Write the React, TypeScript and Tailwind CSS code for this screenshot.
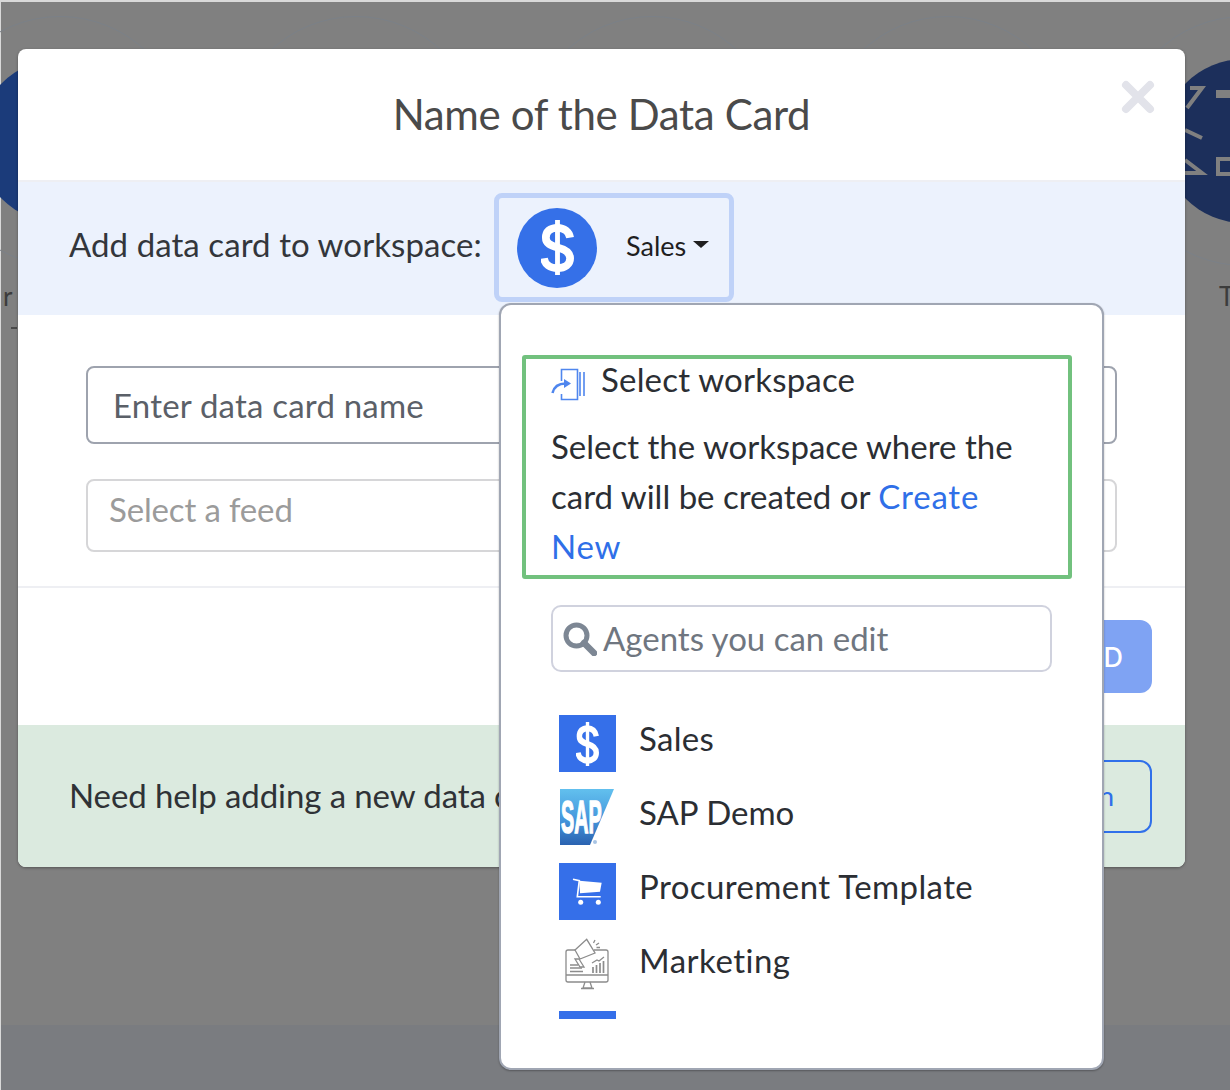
const rings = [60, 356, 652, 948, 1244];

function BackdropRing({ x }: { x: number }) {
  return (
    <div
      className="absolute top-[16px] w-[250px] h-[250px] rounded-full border border-[#7b8088]"
      style={{ left: x - 125 }}
    />
  );
}

function DollarMark({ width, height }: { width: number; height: number }) {
  return (
    <svg width={width} height={height} viewBox="0 0 34 56" fill="none" stroke="#ffffff" preserveAspectRatio="none">
      <path d="M17 0v56" strokeWidth="5" />
      <path d="M30 18c-1-6-6-10-13-10C9 8 5 12 5 18c0 6 5 8 12 10 8 2 13 5 13 11 0 6-5 10-13 10-8 0-13-4-14-10" strokeWidth="8" />
    </svg>
  );
}

function WorkspaceIcon() {
  return (
    <svg width="36" height="34" viewBox="0 0 36 34" fill="none" stroke="#4f86ee" strokeWidth="1.6">
      <path d="M10.5 13V1.5h16v30h-16V26" />
      <path d="M29 4v24M33 4v24" />
      <path d="M1.5 25c1.5-6 6-9.5 13-9.5" strokeWidth="2.6" />
      <path d="M13 11l7 4.5-7 4.5z" fill="#4f86ee" stroke="none" />
    </svg>
  );
}

function SapLogo() {
  return (
    <svg width="57" height="57" viewBox="0 0 57 57">
      <defs>
        <linearGradient id="sapFill" x1="0" y1="0" x2="0" y2="1">
          <stop offset="0" stopColor="#62c0ee" />
          <stop offset="0.55" stopColor="#4496dc" />
          <stop offset="1" stopColor="#2a62b0" />
        </linearGradient>
      </defs>
      <polygon points="1,0 55,0 31,56 1,56" fill="url(#sapFill)" />
      <text
        transform="translate(2 44) scale(0.43 1)"
        fill="#ffffff"
        stroke="#ffffff"
        strokeWidth="1.6"
        fontFamily="'Liberation Sans', sans-serif"
        fontWeight="700"
        fontSize="46"
      >
        SAP
      </text>
      <circle cx="36" cy="53" r="2" fill="#a8c4e4" />
    </svg>
  );
}

function CartIcon() {
  return (
    <div className="w-[57px] h-[57px] bg-[#356fe9]">
      <svg width="57" height="57" viewBox="0 0 57 57" fill="none" stroke="#ffffff" strokeWidth="1.6">
        <path d="M14 16.3l6.3 1.4-2 16h23.4" />
        <path d="M20.3 17.7l22.4 2-1.7 9-20 1.6z" fill="#ffffff" stroke="none" />
        <circle cx="21.7" cy="39.3" r="2.5" fill="#ffffff" stroke="none" />
        <circle cx="39.3" cy="39.3" r="2.5" fill="#ffffff" stroke="none" />
      </svg>
    </div>
  );
}

function MarketingIcon() {
  return (
    <svg width="57" height="57" viewBox="0 0 57 57" fill="none" stroke="#8c8c8c" strokeWidth="1.3">
      <path d="M18 13H9a2 2 0 0 0-2 2v28a2 2 0 0 0 2 2h38a2 2 0 0 0 2-2V15a2 2 0 0 0-2-2H35" />
      <path d="M7 38h42M26 45l-2 6h9l-2-6M22 51.5h13" />
      <path d="M20 22l5 8h-4l-5-8z" fill="#ffffff" />
      <path d="M16 13L27.7 2.3 36 16l-15 6-5-9z" fill="#ffffff" />
      <path d="M36 3l-1.5 3M40 6l-3 2M41 10.5h-3.5" />
      <path d="M11 28h8M11 31h12M11 34.5h13" strokeWidth="1.7" />
      <path d="M34 36v-6M37.5 36v-8M41 36v-10M44.5 36v-12" strokeWidth="1.7" />
      <path d="M33 26l5-3 2 1 5-4" />
    </svg>
  );
}

function ListRow({ icon, label, tracking }: { icon: React.ReactNode; label: string; tracking: string }) {
  return (
    <div className="flex items-start h-[74px]">
      <div className="w-[57px] h-[57px] shrink-0">{icon}</div>
      <span className={`ml-[23px] -mt-[2px] text-[33px] leading-[50px] text-[#2b2e33] ${tracking}`}>{label}</span>
    </div>
  );
}

export default function App() {
  return (
    <div className="relative w-[1230px] h-[1090px] overflow-hidden bg-[#d9d9d9] pt-[2px] pl-[1px] font-['Lato',sans-serif]">
      {/* Dimmed page behind the modal */}
      <div className="h-full flex flex-col bg-[#808080]">
        <div className="flex-1" />
        <div className="h-[65px] bg-[#7a7c80]" />
      </div>
      {rings.map((x) => (
        <BackdropRing key={x} x={x} />
      ))}
      <div className="absolute left-[-22px] top-[59px] w-[164px] h-[164px] rounded-full bg-[#1b3b7a]" />
      <div className="absolute left-[1162px] top-[59px] w-[164px] h-[164px] rounded-full bg-[#1c2f5b] overflow-hidden">
        <svg width="164" height="164" viewBox="0 0 164 164" fill="none" stroke="#808080" strokeWidth="4">
          <path d="M25 49L40 29H28M23 71l17 8M23 101l17 13H23" />
          <path d="M54 35h14" strokeWidth="8" />
          <path d="M56 100h14v15H56z" />
        </svg>
      </div>
      <span className="absolute left-[3px] top-[277px] text-[26px] text-[#3c3c3c]">r</span>
      <span className="absolute left-[1219px] top-[277px] text-[26px] text-[#3c3c3c]">T</span>
      <div className="absolute left-[11px] top-[327px] w-[6px] h-[2px] bg-[#4a4a4a]" />

      {/* Modal */}
      <div className="absolute left-[18px] top-[49px] w-[1167px] h-[818px] rounded-[8px] bg-white overflow-hidden flex flex-col shadow-[0_1px_3px_rgba(0,0,0,0.35)]">
        <div className="relative h-[133px] shrink-0 flex items-center justify-center border-b-2 border-[#eeeff3]">
          <h1 className="text-[42px] tracking-[-0.35px] text-[#4a4a4a] leading-none -mt-[1px]">Name of the Data Card</h1>
          <svg className="absolute left-[1103px] top-[31px]" width="34" height="34" viewBox="0 0 34 34" stroke="#e2e3ea" strokeWidth="8" strokeLinecap="round">
            <path d="M5 5l24 24M29 5L5 29" />
          </svg>
        </div>
        <div className="h-[133px] shrink-0 bg-[#ecf2fd] flex items-start pl-[51px] pt-[11px]">
          <span className="w-[413px] mt-[26px] text-[33px] tracking-[0.07px] leading-[50px] text-[#33363b] whitespace-nowrap">Add data card to workspace:</span>
          <div className="ml-[12px] w-[240px] h-[109px] rounded-[8px] border-[5px] border-[#bfd2f8] flex items-center pl-[18px]">
            <div className="w-[80px] h-[80px] rounded-full bg-[#3570e8] flex items-center justify-center">
              <DollarMark width={33} height={55} />
            </div>
            <span className="ml-[29px] -mt-[2px] text-[27px] text-[#1f1f1f]">Sales</span>
            <div className="ml-[7px] -mt-[6px] w-0 h-0 border-x-[8px] border-x-transparent border-t-[7px] border-t-[#1f1f1f]" />
          </div>
        </div>
        <div className="h-[274px] shrink-0 px-[68px] pt-[51px] flex flex-col">
          <div className="h-[78px] shrink-0 rounded-[8px] border-2 border-[#9ea3ae] flex items-center pl-[25px] pt-[2px] text-[33px] tracking-[0.2px] text-[#5b6068]">
            Enter data card name
          </div>
          <div className="mt-[35px] h-[73px] shrink-0 rounded-[8px] border-2 border-[#d6d6d8] flex items-center pl-[21px] pb-[12px] text-[33px] tracking-[-0.15px] text-[#9b9b9b]">
            Select a feed
          </div>
          <div className="mt-[34px] -mx-[68px] border-t-2 border-[#eeeff3]" />
        </div>
        <div className="flex-1 flex flex-col">
          <div className="h-[136px] shrink-0 flex items-start justify-end pr-[33px] pt-[31px]">
            <div className="w-[160px] h-[73px] rounded-[12px] bg-[#7fa3f3] text-white text-[27px] font-medium flex items-center justify-end pr-[29px] pt-[3px] font-['Inter',sans-serif]">
              ADD
            </div>
          </div>
          <div className="flex-1 bg-[#dbeadf] flex items-center justify-between pl-[51px] pr-[33px]">
            <span className="text-[33px] tracking-[-0.1px] text-[#2f3236] whitespace-nowrap">Need help adding a new data card?</span>
            <div className="w-[180px] h-[73px] rounded-[12px] border-2 border-[#3070ea] text-[#3070ea] text-[27px] flex items-center justify-end pr-[36px]">
              Learn
            </div>
          </div>
        </div>
      </div>

      {/* Workspace dropdown */}
      <div className="absolute left-[499px] top-[303px] w-[605px] h-[767px] rounded-[12px] border-2 border-[#a0a6b3] bg-white pt-[50px] pl-[21px] shadow-[0_1px_2px_rgba(0,0,0,0.3)]">
        <div className="w-[550px] h-[224px] rounded-[3px] border-4 border-[#72c17e] pl-[25px] overflow-hidden">
          <div className="flex items-start h-[60px]">
            <div className="mt-[9px]"><WorkspaceIcon /></div>
            <span className="ml-[14px] -mt-[5px] text-[33px] tracking-[0.2px] leading-[50px] text-[#2b2e33]">Select workspace</span>
          </div>
          <p className="w-[490px] mt-[2px] text-[33px] leading-[50px] text-[#2b2e33]">
            Select the workspace where the card will be created or <span className="text-[#2f6fe8] tracking-[0.8px]">Create New</span>
          </p>
        </div>
        <div className="ml-[29px] mt-[26px] w-[501px] h-[67px] rounded-[10px] border-2 border-[#d0d2de] flex items-center pl-[10px]">
          <svg width="34" height="34" viewBox="0 0 34 34" fill="none" stroke="#7d8794">
            <circle cx="13.5" cy="13.5" r="10.5" strokeWidth="5" />
            <path d="M21 21l10 10" strokeWidth="6.5" strokeLinecap="round" />
          </svg>
          <span className="ml-[6px] text-[33px] text-[#6f7680]">Agents you can edit</span>
        </div>
        <div className="ml-[37px] mt-[43px] flex flex-col">
          <ListRow
            icon={
              <div className="w-[57px] h-[57px] bg-[#356fe9] flex items-center justify-center">
                <DollarMark width={23} height={44} />
              </div>
            }
            label="Sales"
            tracking="tracking-[0.3px]"
          />
          <ListRow icon={<SapLogo />} label="SAP Demo" tracking="tracking-normal" />
          <ListRow icon={<CartIcon />} label="Procurement Template" tracking="tracking-[0.4px]" />
          <ListRow icon={<MarketingIcon />} label="Marketing" tracking="tracking-[0.5px]" />
          <div className="w-[57px] h-[8px] bg-[#356fe9]" />
        </div>
      </div>
    </div>
  );
}
